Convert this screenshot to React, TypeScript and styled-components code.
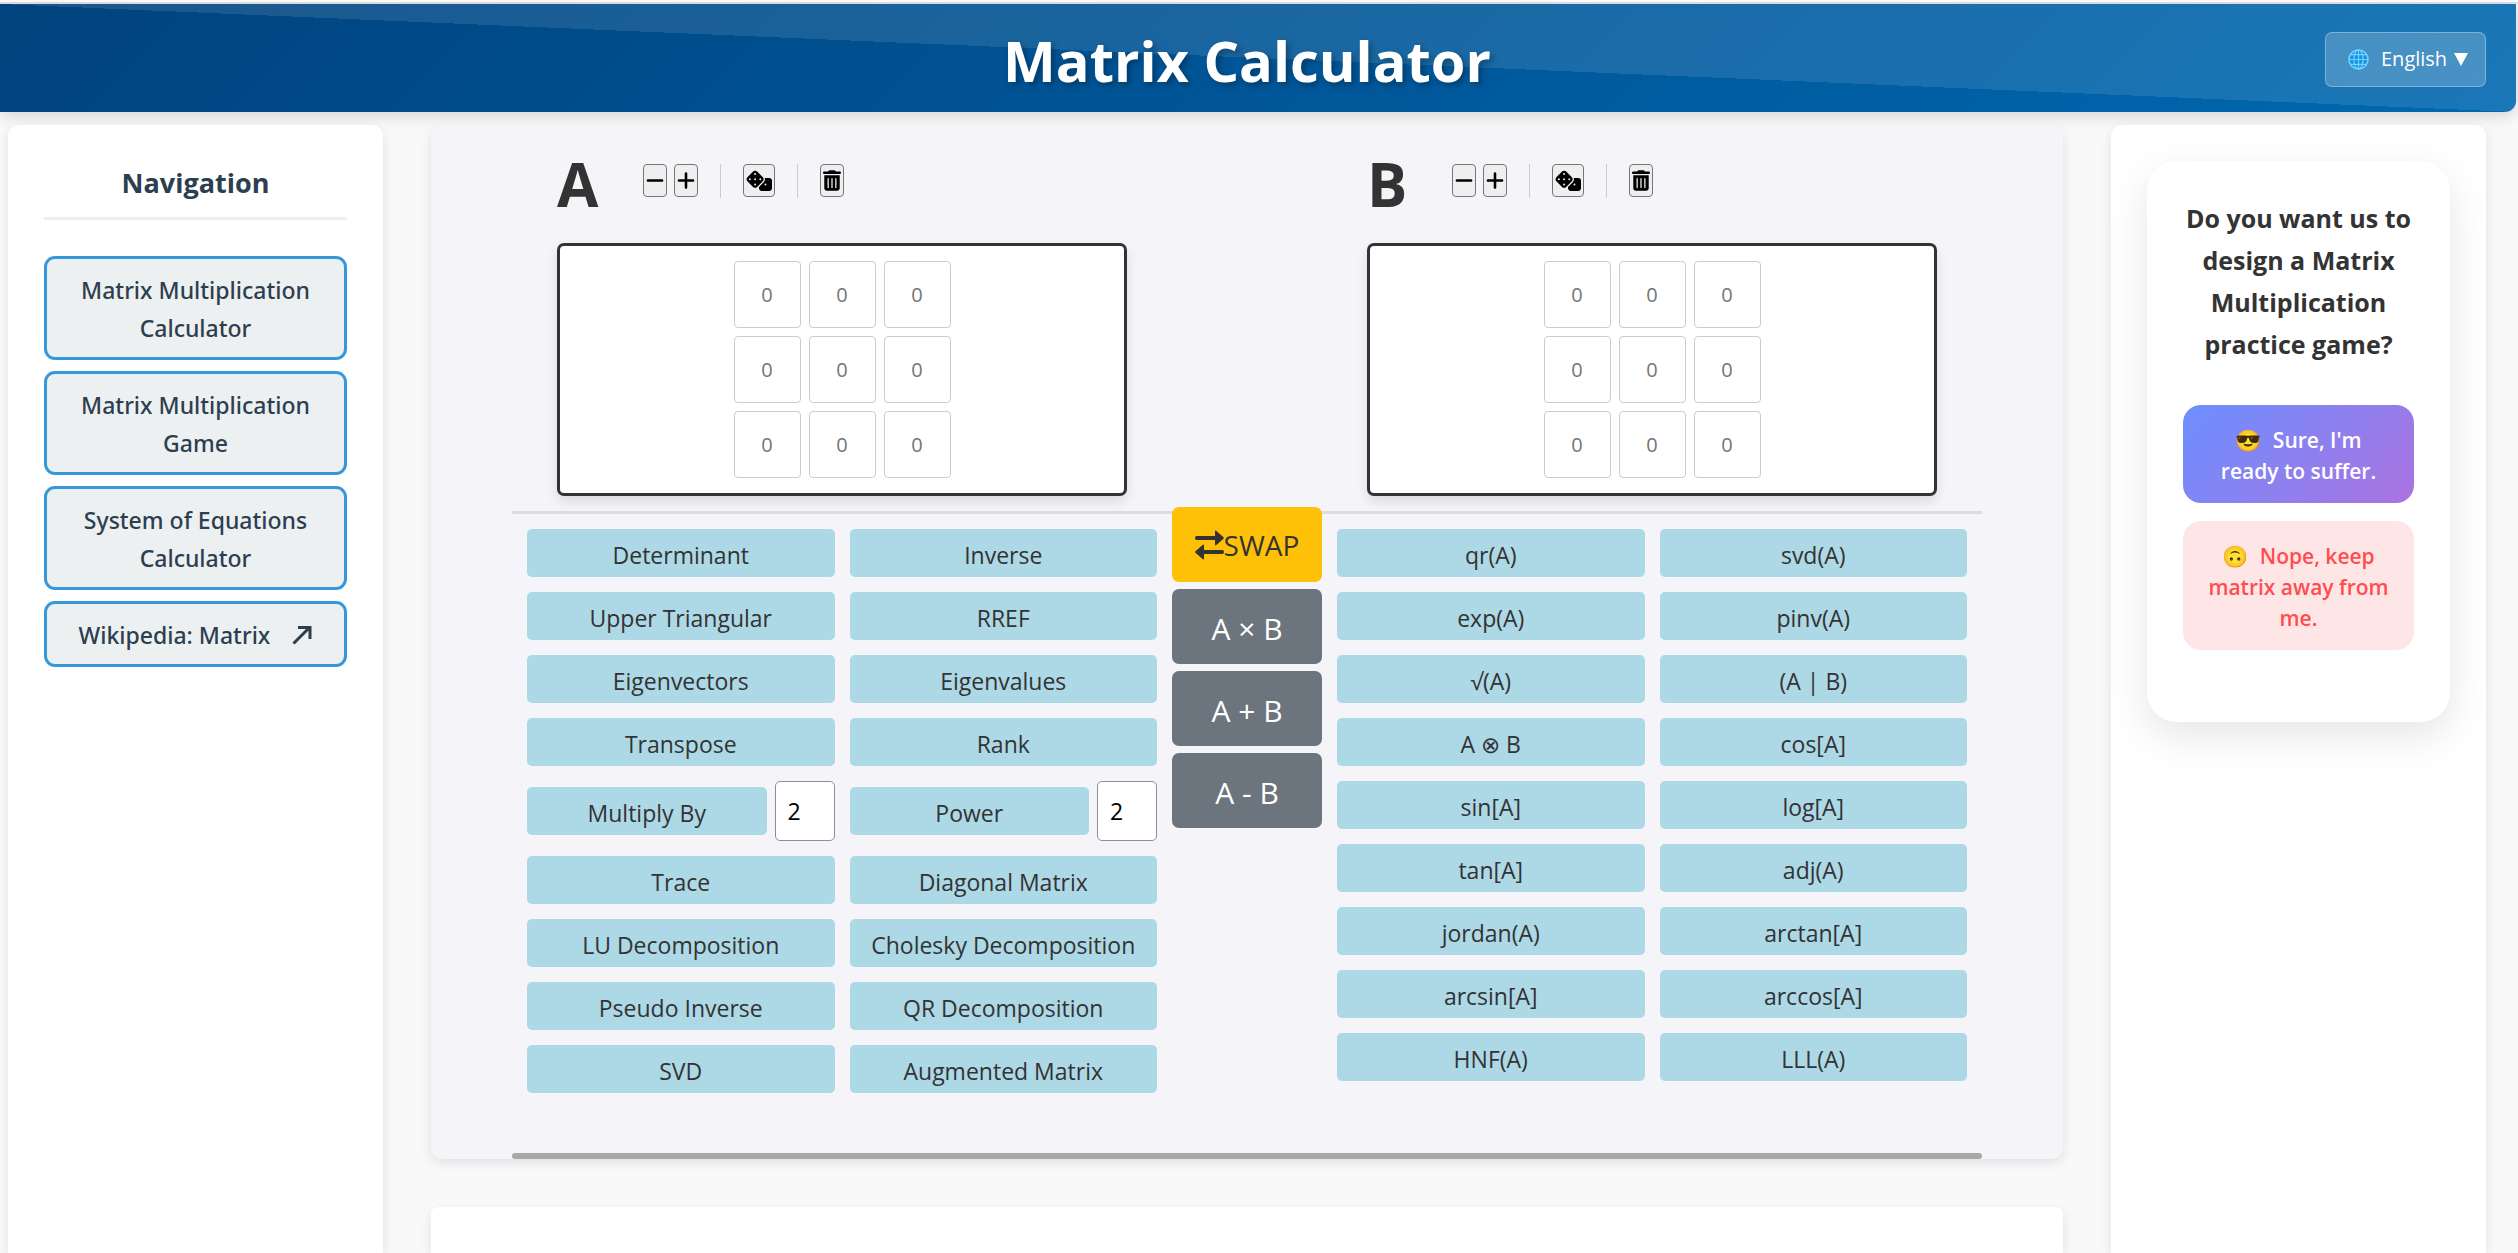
import React from 'react';
import styled, { createGlobalStyle, css } from 'styled-components';
import { FaDice, FaMinus, FaPlus, FaTrashCan } from 'react-icons/fa6';

const GlobalStyle = createGlobalStyle`
  *, *::before, *::after { box-sizing: border-box; }
  body {
    margin: 0;
    background: #f9f9f9;
    color: #333;
    font-family: "Open Sans", "Noto Sans", sans-serif;
  }
  button, input, select { font-family: inherit; }
`;

const Page = styled.div`
  display: flex;
  flex-direction: column;
  min-height: 100vh;
`;

const TopStrip = styled.div`
  height: 4px;
  background: #fff;
  border-bottom: 2px solid #e4e2e2;
`;

const Header = styled.header`
  display: grid;
  grid-template-columns: 1fr auto 1fr;
  align-items: center;
  height: 108px;
  margin-right: 2px;
  padding: 2px 30px 0 8px;
  border-radius: 0 0 11px 0;
  background:
    linear-gradient(to bottom left, rgba(255, 255, 255, 0.1) 50%, transparent 50%),
    linear-gradient(135deg, #00437f, #0068b0);
  box-shadow: 0 4px 15px rgba(0, 0, 0, 0.15);
`;

const SiteTitle = styled.h1`
  grid-column: 2;
  margin: 0;
  padding-top: 2px;
  font-size: 56px;
  line-height: 64px;
  font-weight: 700;
  color: #fff;
  text-shadow: 3px 3px 6px rgba(0, 0, 0, 0.3);
`;

const LanguagePicker = styled.label`
  display: flex;
  align-items: center;
  justify-self: end;
  height: 55px;
  padding: 0 17px 0 22px;
  border: 1px solid rgba(255, 255, 255, 0.3);
  border-radius: 7px;
  background: rgba(255, 255, 255, 0.2);
  color: #fff;
  font-size: 20px;
`;

const LanguageSelect = styled.select`
  appearance: none;
  margin: 0 6px 0 12px;
  padding: 0;
  border: 0;
  background: none;
  color: #fff;
  font-size: 20px;
  line-height: 28px;
  option { color: #333; }
`;

const Caret = styled.span`
  width: 0;
  border: 7px solid transparent;
  border-top: 13px solid #fff;
  border-bottom: 0;
`;

const Layout = styled.div`
  display: grid;
  flex: 1;
  grid-template-columns: 375px minmax(0, 1fr) 375px;
  column-gap: 48px;
  padding: 13px 32px 0 8px;
`;

const panel = css`
  box-shadow: 0 4px 12px rgba(0, 0, 0, 0.1);
`;

const Sidebar = styled.aside`
  ${panel}
  padding: 36px;
  border-radius: 11px 11px 0 0;
  background: #fff;
`;

const SidebarTitle = styled.h2`
  margin: 0 0 36px;
  padding-bottom: 12px;
  border-bottom: 3px solid #ecf0f1;
  font-size: 27px;
  line-height: 44px;
  font-weight: 700;
  color: #2c3e50;
  text-align: center;
`;

const NavList = styled.ul`
  display: grid;
  gap: 11px;
  margin: 0;
  padding: 0;
  list-style: none;
`;

const NavLink = styled.a`
  display: block;
  padding: 12px 18px 10px;
  border: 3px solid #3498db;
  border-radius: 11px;
  background: #ecf0f1;
  color: #2c3e50;
  font-family: "Noto Sans", sans-serif;
  font-size: 23px;
  line-height: 38px;
  font-weight: 500;
  text-align: center;
  text-decoration: none;
`;

const ExternalMark = styled.svg`
  width: 20px;
  height: 20px;
  margin-left: 22px;
  vertical-align: -1px;
  fill: none;
  stroke: currentColor;
  stroke-width: 3;
`;

const MainColumn = styled.main`
  display: flex;
  flex-direction: column;
  gap: 48px;
`;

const Calculator = styled.section`
  ${panel}
  padding: 29px 81px 0;
  border-radius: 11px;
  background: #f4f4f9;
`;

const Matrices = styled.div`
  display: grid;
  grid-template-columns: 1fr 1fr;
  column-gap: 240px;
  padding: 0 45px;
`;

const MatrixHeader = styled.div`
  display: flex;
  align-items: center;
  gap: 45px;
  margin-bottom: 29px;
`;

const MatrixName = styled.h2`
  margin: 0;
  font-size: 60px;
  line-height: 60px;
  font-weight: 700;
`;

const Tools = styled.div`
  display: flex;
  gap: 22px;
  padding-bottom: 6px;
`;

const ToolPair = styled.div`
  display: flex;
  gap: 7px;
`;

const ToolButton = styled.button<{ $wide?: boolean }>`
  display: flex;
  align-items: center;
  height: 33px;
  padding: 0 2px;
  border: 1px solid #767676;
  border-radius: 4px;
  background: #efefef;
  color: #000;
  svg { width: ${p => (p.$wide ? 26 : 18)}px; height: 21px; }
`;

const Divider = styled.span`
  width: 1px;
  height: 34px;
  background: #ccc;
`;

const MatrixGrid = styled.div`
  display: grid;
  grid-template-columns: repeat(3, 67px);
  justify-content: center;
  gap: 8px;
  padding: 15px;
  border: 3px solid #333;
  border-radius: 7px;
  background: #fff;
  box-shadow: 0 6px 12px rgba(0, 0, 0, 0.1);
`;

const Cell = styled.input`
  width: 67px;
  height: 67px;
  padding: 0;
  border: 1px solid #ccc;
  border-radius: 4px;
  background: #fff;
  font-size: 20px;
  text-align: center;
  &::placeholder { color: #757575; opacity: 1; }
`;

const Operations = styled.div`
  display: grid;
  grid-template-columns: 1fr 150px 1fr;
  align-items: start;
  gap: 15px;
  margin-top: 15px;
  padding: 15px 15px 60px;
  border-top: 3px solid #dcdce1;
`;

const ButtonGrid = styled.div`
  display: grid;
  grid-template-columns: 1fr 1fr;
  gap: 15px;
`;

const OperationButton = styled.button`
  flex: 1;
  min-width: 0;
  height: 48px;
  padding: 3px 4px 0;
  border: 0;
  border-radius: 5px;
  background: #add8e6;
  color: #333;
  font-size: 23px;
  line-height: 32px;
`;

const ValueRow = styled.div`
  display: flex;
  align-items: center;
  gap: 8px;
`;

const ValueInput = styled.input`
  width: 60px;
  height: 60px;
  padding: 0 12px;
  border: 1px solid #8f8f8f;
  border-radius: 5px;
  background: #fff;
  color: #000;
  font-size: 23px;
`;

const PairColumn = styled.div`
  display: grid;
  gap: 7px;
  margin-top: -22px;
`;

const PairButton = styled.button<{ $accent?: boolean }>`
  display: flex;
  align-items: center;
  justify-content: center;
  height: 75px;
  padding: ${p => (p.$accent ? 0 : 3)}px 0 0;
  border: 0;
  border-radius: 7px;
  background: ${p => (p.$accent ? '#ffc107' : '#6c757d')};
  color: ${p => (p.$accent ? '#333' : '#fff')};
  font-size: ${p => (p.$accent ? 28 : 30)}px;
`;

const ScrollThumb = styled.div`
  height: 6px;
  border-radius: 3px;
  background: #a8a8a8;
`;

const ResultCard = styled.section`
  ${panel}
  flex: 1;
  border-radius: 7px 7px 0 0;
  background: #fff;
`;

const PollCard = styled.section`
  padding: 36px 36px 72px;
  border-radius: 30px;
  background: #fff;
  box-shadow: 0 14px 42px rgba(0, 0, 0, 0.1);
`;

const Question = styled.h2`
  margin: 0 0 40px;
  font-size: 25px;
  line-height: 42px;
  font-weight: 700;
  text-align: center;
`;

const Answers = styled.div`
  display: grid;
  gap: 18px;
`;

const AnswerButton = styled.button<{ $primary?: boolean }>`
  padding: 20px 22px 16px;
  border: 0;
  border-radius: 18px;
  background: ${p => (p.$primary ? 'linear-gradient(135deg, #6c8fff, #ab72e0)' : '#ffe6e6')};
  color: ${p => (p.$primary ? '#fff' : '#ff4d4f')};
  font-size: 21px;
  line-height: 31px;
  font-weight: 600;
`;

const Face = styled.span`
  margin-right: 6px;
`;

const GlobeIcon = () => (
  <svg width="21" height="21" viewBox="0 0 21 21" fill="none" stroke="#6fd6ff" aria-hidden="true">
    <circle cx="10.5" cy="10.5" r="9.5" fill="#1c8fe0" strokeWidth="1.6" />
    <ellipse cx="10.5" cy="10.5" rx="4.6" ry="9.5" strokeWidth="1.2" />
    <path d="M10.5 1v19M1 10.5h19M2.8 5.6h15.4M2.8 15.4h15.4" strokeWidth="1.2" />
  </svg>
);

const SwapIcon = () => (
  <svg width="29" height="30" viewBox="0 0 29 30" fill="currentColor" aria-hidden="true">
    <path d="M1.5 6H20V1.6Q20 0 21.4 1l6.9 6q1 1 0 2l-6.9 6Q20 16 20 14.4V10H1.5Q0 10 0 8t1.5-2z" />
    <path d="M27.5 20H9v-4.400Q9 14 7.6 15L.7 21q-1 1 0 2l6.9 6Q9 30 9 28.4V24h18.5Q29 24 29 22t-1.500-2z" />
  </svg>
);

const cells = [0, 1, 2, 3, 4, 5, 6, 7, 8];

const Matrix = ({ name }: { name: string }) => (
  <section aria-label={`Matrix ${name}`}>
    <MatrixHeader>
      <MatrixName>{name}</MatrixName>
      <Tools>
        <ToolPair>
          <ToolButton aria-label={`Shrink ${name}`}><FaMinus /></ToolButton>
          <ToolButton aria-label={`Grow ${name}`}><FaPlus /></ToolButton>
        </ToolPair>
        <Divider />
        <ToolButton $wide aria-label={`Randomize ${name}`}><FaDice /></ToolButton>
        <Divider />
        <ToolButton aria-label={`Clear ${name}`}><FaTrashCan /></ToolButton>
      </Tools>
    </MatrixHeader>
    <MatrixGrid>
      {cells.map(i => (
        <Cell
          key={i}
          placeholder="0"
          inputMode="decimal"
          aria-label={`${name} row ${Math.floor(i / 3) + 1} column ${(i % 3) + 1}`}
        />
      ))}
    </MatrixGrid>
  </section>
);

const namedBefore = [
  'Determinant', 'Inverse', 'Upper Triangular', 'RREF',
  'Eigenvectors', 'Eigenvalues', 'Transpose', 'Rank',
];
const withValue = ['Multiply By', 'Power'];
const namedAfter = [
  'Trace', 'Diagonal Matrix', 'LU Decomposition', 'Cholesky Decomposition',
  'Pseudo Inverse', 'QR Decomposition', 'SVD', 'Augmented Matrix',
];
const functions = [
  'qr(A)', 'svd(A)', 'exp(A)', 'pinv(A)', '√(A)', '(A | B)', 'A ⊗ B', 'cos[A]', 'sin[A]',
  'log[A]', 'tan[A]', 'adj(A)', 'jordan(A)', 'arctan[A]', 'arcsin[A]', 'arccos[A]', 'HNF(A)', 'LLL(A)',
];

const buttons = (labels: string[]) =>
  labels.map(label => <OperationButton key={label}>{label}</OperationButton>);

export default function App() {
  return (
    <Page>
      <GlobalStyle />
      <TopStrip />
      <Header>
        <SiteTitle>Matrix Calculator</SiteTitle>
        <LanguagePicker>
          <GlobeIcon />
          <LanguageSelect aria-label="Language" defaultValue="en">
            <option value="en">English</option>
          </LanguageSelect>
          <Caret />
        </LanguagePicker>
      </Header>
      <Layout>
        <Sidebar>
          <SidebarTitle>Navigation</SidebarTitle>
          <nav aria-label="Site">
            <NavList>
              <li><NavLink href="#multiplication">Matrix Multiplication Calculator</NavLink></li>
              <li><NavLink href="#game">Matrix Multiplication Game</NavLink></li>
              <li><NavLink href="#equations">System of Equations Calculator</NavLink></li>
              <li>
                <NavLink href="#wikipedia">
                  Wikipedia: Matrix
                  <ExternalMark viewBox="0 0 20 20" aria-hidden="true">
                    <path d="M1.5 18.5L17 3M6 2.5h12V14" />
                  </ExternalMark>
                </NavLink>
              </li>
            </NavList>
          </nav>
        </Sidebar>
        <MainColumn>
          <Calculator>
            <Matrices>
              <Matrix name="A" />
              <Matrix name="B" />
            </Matrices>
            <Operations>
              <ButtonGrid>
                {buttons(namedBefore)}
                {withValue.map(label => (
                  <ValueRow key={label}>
                    <OperationButton>{label}</OperationButton>
                    <ValueInput defaultValue="2" inputMode="numeric" aria-label={`${label} value`} />
                  </ValueRow>
                ))}
                {buttons(namedAfter)}
              </ButtonGrid>
              <PairColumn>
                <PairButton $accent><SwapIcon />SWAP</PairButton>
                <PairButton>A × B</PairButton>
                <PairButton>A + B</PairButton>
                <PairButton>A - B</PairButton>
              </PairColumn>
              <ButtonGrid>{buttons(functions)}</ButtonGrid>
            </Operations>
            <ScrollThumb />
          </Calculator>
          <ResultCard aria-label="Result" />
        </MainColumn>
        <Sidebar>
          <PollCard>
            <Question>Do you want us to design a Matrix Multiplication practice game?</Question>
            <Answers>
              <AnswerButton $primary><Face>😎</Face> Sure, I'm ready to suffer.</AnswerButton>
              <AnswerButton><Face>🙃</Face> Nope, keep matrix away from me.</AnswerButton>
            </Answers>
          </PollCard>
        </Sidebar>
      </Layout>
    </Page>
  );
}
